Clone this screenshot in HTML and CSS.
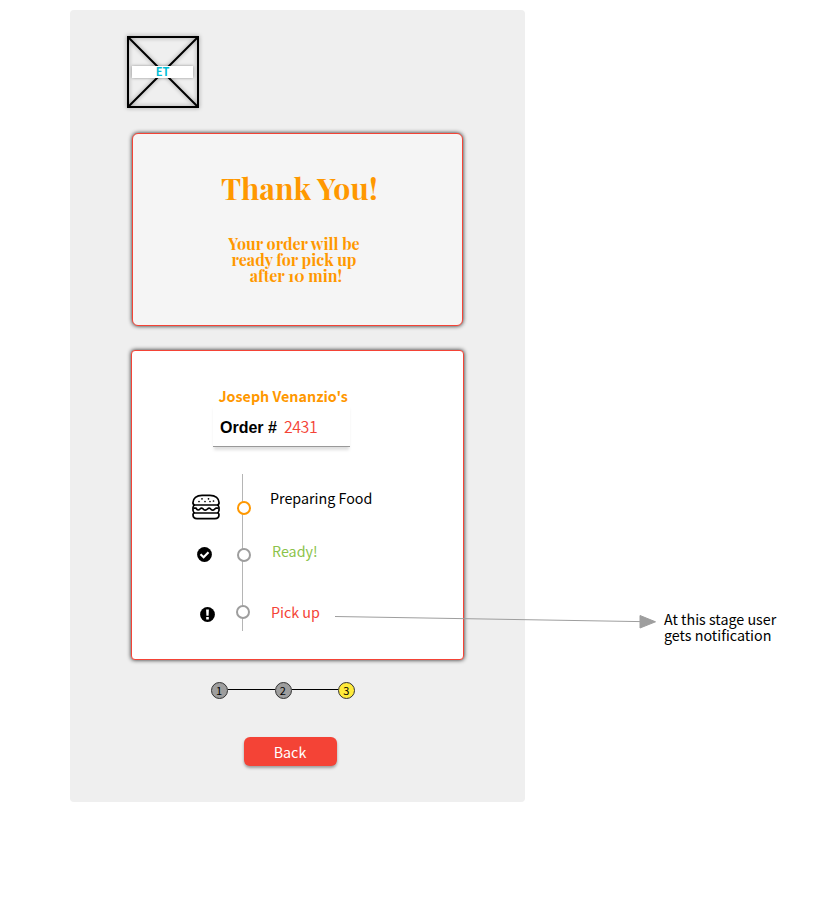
FILE: index.html
```html
<!DOCTYPE html>
<html lang="en">
<head>
<meta charset="utf-8">
<title>Order status</title>
<link rel="stylesheet" href="styles.css">
</head>
<body>
<div class="canvas">
  <main class="board">
    <div class="logo">
      <svg class="logo-cross" viewBox="0 0 72 72"><path d="M1 1H71V71H1ZM1 1L71 71M71 1L1 71"/></svg>
      <span class="logo-name">ET</span>
    </div>
    <section class="thanks">
      <h1>Thank You!</h1>
      <p>Your order will be<br>ready for pick up<br><span class="last">after 10 min!</span></p>
    </section>
    <section class="order">
      <h2>Joseph Venanzio's</h2>
      <div class="order-no"><b>Order #</b><span>2431</span></div>
      <div class="timeline">
        <div class="stage preparing">
          <svg class="burger" viewBox="0 0 28 26"><path d="M1 9.500C.5 4 5 1.300 10 1.300H18C23 1.300 27.500 4 27 9.500Q26.700 11 25 11H3Q1.300 11 1 9.500ZM3 11Q1 11.500 1 13.500V16.500Q1.300 18.700 3 19H25Q26.700 18.700 27 16.500V13.500Q27 11.500 25 11M2.800 19H25.200Q27 19 27 20.800C27 23.300 25.500 24.700 23 24.700H5C2.500 24.700 1 23.300 1 20.800Q1 19 2.800 19Z"/><path d="M1.500 14.200H4Q6 17.300 8 15Q9.700 13.200 11.500 15.300Q13.500 17 15.500 15Q17.300 13.200 19 15.300Q21 17.300 23 14.800L24 14.200H26.500"/><path class="seeds" d="M7 7.500h.01M10 4.800h.01M13 7.500h.01M16.500 4.800h.01M18 7.500h.01M21.500 7h.01"/></svg>
          <i class="dot"></i><span class="label">Preparing Food</span>
        </div>
        <div class="stage ready">
          <svg class="badge" viewBox="0 0 15 15"><circle cx="7.500" cy="7.500" r="7.400"/><path d="M3.500 7.300L6.600 10.200L11.500 5.300"/></svg>
          <i class="dot"></i><span class="label">Ready!</span>
        </div>
        <div class="stage pickup">
          <svg class="badge" viewBox="0 0 15 15"><circle cx="7.500" cy="7.500" r="7.400"/><path class="mark" d="M6.100 2.500H8.900L8.600 8.800H6.400ZM6.200 10H8.800V12.400H6.200Z"/></svg>
          <i class="dot"></i><span class="label">Pick up</span>
        </div>
      </div>
    </section>
    <div class="steps">
      <span class="step">1</span><i class="link"></i><span class="step">2</span><i class="link"></i><span class="step current">3</span>
    </div>
    <button class="back">Back</button>
  </main>
  <aside class="note">At this stage user<br>gets notification</aside>
  <svg class="arrow" viewBox="0 0 324 18"><path d="M1 5.500L306 10.600"/><path class="head" d="M306 4.500L321.500 10.800L306 17Z"/></svg>
</div>
</body>
</html>
```
FILE: styles.css
```css
* { box-sizing: border-box; }
body {
  margin: 0;
  background: #fff;
  color: #000;
  font: 14.3px/16px "Noto Sans CJK SC", "Open Sans", sans-serif;
}
svg { display: block; overflow: visible; }
h1, h2, p { margin: 0; }
.canvas {
  position: relative;
  display: flex;
  align-items: flex-start;
  width: 840px;
  height: 912px;
  padding: 10px 0 0 70px;
  overflow: hidden;
}
.board {
  display: flex;
  flex-direction: column;
  align-items: flex-start;
  width: 455px;
  height: 792px;
  padding-top: 26px;
  background: #efefef;
  border-radius: 4px;
}
.logo { display: grid; width: 72px; height: 72px; margin-left: 57px; }
.logo > * { grid-area: 1 / 1; }
.logo-cross {
  width: 72px;
  height: 72px;
  fill: none;
  stroke: #000;
  stroke-width: 2;
  filter: drop-shadow(0 0 2px rgba(0, 0, 0, .4));
}
.logo-name {
  z-index: 1;
  width: 61px;
  height: 12px;
  margin: 30px 0 0 5px;
  background: #fff;
  box-shadow: 0 0 3px rgba(0, 0, 0, .4);
  color: #00bcd4;
  font-size: 11px;
  font-weight: 700;
  line-height: 11px;
  text-align: center;
}
.thanks, .order {
  border: 1px solid #f44336;
  box-shadow: 0 0 4px rgba(0, 0, 0, .85);
}
.thanks {
  width: 331px;
  height: 193px;
  margin: 25px 0 0 62px;
  padding-top: 34px;
  border-radius: 6px;
  background: #f5f5f5;
  color: #ff9800;
  font-family: "Playfair Display", "Liberation Serif", serif;
  font-weight: 700;
}
.thanks h1 {
  margin-left: 88px;
  font-size: 30.2px;
  line-height: 40px;
}
.thanks p {
  width: 134px;
  margin: 28px 0 0 94px;
  font-size: 16px;
  text-align: center;
  white-space: nowrap;
}
.last { padding-left: 4px; }
.order {
  width: 333px;
  height: 310px;
  margin: 24px 0 0 61px;
  padding-top: 37px;
  border-radius: 4px;
  background: #fff;
}
.order h2 {
  margin-left: 86.5px;
  color: #ff9800;
  font-size: 14.3px;
  font-weight: 700;
  line-height: 16px;
}
.order-no {
  display: flex;
  align-items: center;
  gap: 7px;
  width: 137px;
  height: 43px;
  padding: 5px 0 0 7px;
  margin-left: 81px;
  border-bottom: 1px solid #999;
  box-shadow: 0 4px 3px -1px rgba(0, 0, 0, .13);
  clip-path: inset(0 -4px -8px -4px);
}
.order-no b { font: bold 16px/18px "Liberation Sans", sans-serif; }
.order-no span { margin-top: -3px; color: #f44336; font-size: 16px; font-weight: 350; letter-spacing: -.45px; }
.timeline {
  height: 157px;
  margin: 27px 0 0 56px;
  padding-top: 12px;
  background: linear-gradient(#b5b5b5, #b5b5b5) 54px 0 / 1px 100% no-repeat;
}
.stage { display: grid; grid-template-columns: 49px 14px 1fr; align-items: center; }
.dot {
  width: 14px;
  height: 14px;
  border: 2px solid #9e9e9e;
  border-radius: 50%;
  background: #fff;
}
.burger { width: 28px; height: 26px; margin: -3px 0 0 4px; fill: none; stroke: #000; stroke-width: 1.7; }
.burger .seeds { stroke-linecap: round; stroke-width: 1.7; }
.badge { width: 15px; height: 15px; margin-left: 9px; }
.badge path { fill: none; stroke: #fff; stroke-width: 2.2; }
.badge .mark { fill: #fff; stroke: none; }
.preparing { height: 45px; }
.preparing .dot { border-color: #ff9800; margin-top: -1px; }
.preparing .label { margin: -21px 0 0 19px; }
.ready { height: 46px; }
.ready .dot { margin-top: 1px; }
.ready .label { margin: -7px 0 0 21px; color: #8bc34a; }
.pickup { height: 37px; margin-top: 17px; grid-template-columns: 48px 14px 1fr; }
.pickup .badge { margin: 3px 0 0 12px; }
.pickup .dot { margin-top: -1px; }
.pickup .label { margin: -2px 0 0 21px; color: #f44336; }
.steps { display: flex; align-items: center; margin: 22px 0 0 141px; }
.step {
  width: 17px;
  height: 17px;
  border: 1px solid #333;
  border-radius: 50%;
  background: #9e9e9e;
  font-size: 11px;
  line-height: 15px;
  text-align: center;
  padding-right: 1px;
}
.step.current { background: #ffeb3b; }
.link { width: 46.7px; height: 1px; margin-top: -2px; background: #000; }
.back {
  width: 93px;
  height: 29px;
  margin: 38px 0 0 174px;
  padding: 1px 1px 0 0;
  border: 0;
  border-radius: 6px;
  background: #f44336;
  box-shadow: 0 2px 3px rgba(0, 0, 0, .35);
  color: #fff;
  font: inherit;
}
.note { margin: 601px 0 0 139px; white-space: nowrap; }
.arrow {
  position: absolute;
  left: 334px;
  top: 611px;
  width: 324px;
  height: 18px;
  fill: none;
  stroke: #9e9e9e;
}
.arrow .head { fill: #9e9e9e; }
```
